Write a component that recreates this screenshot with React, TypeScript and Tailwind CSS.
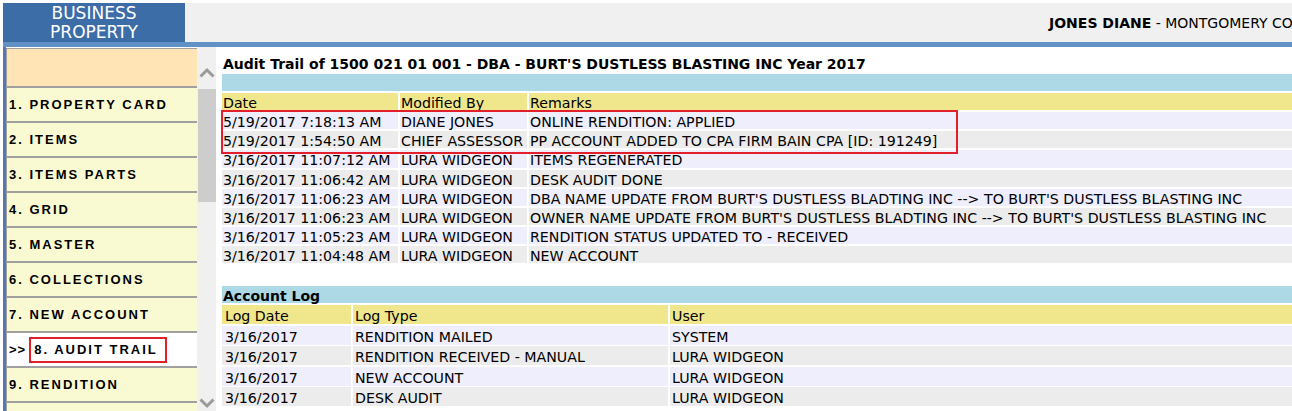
import React from 'react'

const menuItems = [
  '1. PROPERTY CARD',
  '2. ITEMS',
  '3. ITEMS PARTS',
  '4. GRID',
  '5. MASTER',
  '6. COLLECTIONS',
  '7. NEW ACCOUNT',
  '8. AUDIT TRAIL',
  '9. RENDITION',
]

const auditRows = [
  ['5/19/2017 7:18:13 AM', 'DIANE JONES', 'ONLINE RENDITION: APPLIED'],
  ['5/19/2017 1:54:50 AM', 'CHIEF ASSESSOR', 'PP ACCOUNT ADDED TO CPA FIRM BAIN CPA [ID: 191249]'],
  ['3/16/2017 11:07:12 AM', 'LURA WIDGEON', 'ITEMS REGENERATED'],
  ['3/16/2017 11:06:42 AM', 'LURA WIDGEON', 'DESK AUDIT DONE'],
  ['3/16/2017 11:06:23 AM', 'LURA WIDGEON', "DBA NAME UPDATE FROM BURT'S DUSTLESS BLADTING INC --> TO BURT'S DUSTLESS BLASTING INC"],
  ['3/16/2017 11:06:23 AM', 'LURA WIDGEON', "OWNER NAME UPDATE FROM BURT'S DUSTLESS BLADTING INC --> TO BURT'S DUSTLESS BLASTING INC"],
  ['3/16/2017 11:05:23 AM', 'LURA WIDGEON', 'RENDITION STATUS UPDATED TO - RECEIVED'],
  ['3/16/2017 11:04:48 AM', 'LURA WIDGEON', 'NEW ACCOUNT'],
]

const logRows = [
  ['3/16/2017', 'RENDITION MAILED', 'SYSTEM'],
  ['3/16/2017', 'RENDITION RECEIVED - MANUAL', 'LURA WIDGEON'],
  ['3/16/2017', 'NEW ACCOUNT', 'LURA WIDGEON'],
  ['3/16/2017', 'DESK AUDIT', 'LURA WIDGEON'],
]

function Chevron({ up }: { up?: boolean }) {
  return (
    <svg width="16" height="11" viewBox="0 0 16 11" className="block">
      <polyline
        points={up ? '1.5,9.5 8,3 14.5,9.5' : '1.5,1.5 8,8 14.5,1.5'}
        fill="none"
        stroke="#9a9a9a"
        strokeWidth="3"
      />
    </svg>
  )
}

export default function App() {
  return (
    <div className="w-[1292px] h-[411px] overflow-hidden bg-white pt-[3px] pl-[3px] font-['DejaVu_Sans',Verdana,sans-serif] text-black">
      {/* Header */}
      <div className="flex h-[39px]">
        <div className="w-[182px] bg-[#3d6da7] text-white text-[17px] leading-[19px] text-center pt-[1px]">
          BUSINESS
          <br />
          PROPERTY
        </div>
        <div className="flex-1 bg-[#f0f0f0] pl-[864px] pt-[11px] text-[14px] leading-[18px] whitespace-nowrap overflow-hidden">
          <b>JONES DIANE</b> - MONTGOMERY CO
        </div>
      </div>
      <div className="h-[5px] bg-[#6092c6]" />

      <div className="flex h-[364px]">
        {/* Left nav */}
        <div className="w-[3px] bg-[#5579ae]" />
        <div className="w-[191px] mt-[1px] border-l border-t border-[#a0a0a0] bg-[#fafad2] font-['Liberation_Sans',Arial,sans-serif] font-bold text-[13px] tracking-[2px] overflow-hidden">
          <div className="h-[39px] bg-[#ffe4b5] border-b-2 border-[#a0a0a0]" />
          {menuItems.map((m) => {
            const active = m.startsWith('8.')
            return (
              <div
                key={m}
                className={`h-[35px] border-b-2 border-[#a0a0a0] flex items-center pl-[2px] ${active ? 'bg-white' : ''}`}
              >
                {active ? (
                  <>
                    <span className="tracking-[1px]">&gt;&gt;</span>
                    <span className="ml-[3px] border-2 border-[#e31f2b] h-[26px] w-[138px] flex items-center pl-[3px]">
                      {m}
                    </span>
                  </>
                ) : (
                  m
                )}
              </div>
            )
          })}
        </div>

        {/* Scrollbar */}
        <div className="w-[19px] bg-[#f0f0f0] flex flex-col items-center">
          <div className="mt-[19px] h-[12px] flex items-center">
            <Chevron up />
          </div>
          <div className="mt-[11px] ml-[1px] w-[18px] h-[113px] bg-[#cdcdcd]" />
          <div className="mt-auto mb-[2px]">
            <Chevron />
          </div>
        </div>

        {/* Main */}
        <div className="flex-1 pl-[6px] pt-[8px] text-[14.2px] leading-[20px] whitespace-nowrap overflow-hidden">
          <div className="font-bold text-[14px] leading-[19px] pl-[1px]">
            Audit Trail of 1500 021 01 001 - DBA - BURT'S DUSTLESS BLASTING INC Year 2017
          </div>
          <div className="relative">
            <div className="h-[17px] bg-[#add8e6]" />
            <div className="grid grid-cols-[176px_127px_1fr] gap-x-[2px] gap-y-[2px] mt-[2px] auto-rows-[17.14px]">
              <div className="bg-[#f0e68c] pl-[1px]">Date</div>
              <div className="bg-[#f0e68c] pl-[1px]">Modified By</div>
              <div className="bg-[#f0e68c] pl-[1px]">Remarks</div>
              {auditRows.map((r, i) =>
                r.map((c, j) => (
                  <div key={`${i}-${j}`} className={`${i % 2 === 0 ? 'bg-[#eeeefc]' : 'bg-[#ececec]'} pl-[1px]`}>
                    {c}
                  </div>
                ))
              )}
            </div>
            {/* highlight box */}
            <div className="absolute left-[-1px] top-[36px] w-[737px] h-[44px] border-2 border-[#e31f2b]" />
          </div>

          <div className="mt-[23px] h-[17px] bg-[#add8e6] font-bold text-[14px] leading-[20px] pl-[1px]">Account Log</div>
          <div className="grid grid-cols-[129px_315px_1fr] gap-x-[2px] gap-y-[1.3px] mt-[2px] auto-rows-[19.2px] leading-[22px]">
            <div className="bg-[#f0e68c] pl-[3px]">Log Date</div>
            <div className="bg-[#f0e68c] pl-[2px]">Log Type</div>
            <div className="bg-[#f0e68c] pl-[2px]">User</div>
            {logRows.map((r, i) =>
              r.map((c, j) => (
                <div key={`${i}-${j}`} className={`${i % 2 === 0 ? 'bg-[#eeeefc]' : 'bg-[#ececec]'} ${j === 0 ? 'pl-[3px]' : 'pl-[2px]'}`}>
                  {c}
                </div>
              ))
            )}
          </div>
        </div>
      </div>
    </div>
  )
}
